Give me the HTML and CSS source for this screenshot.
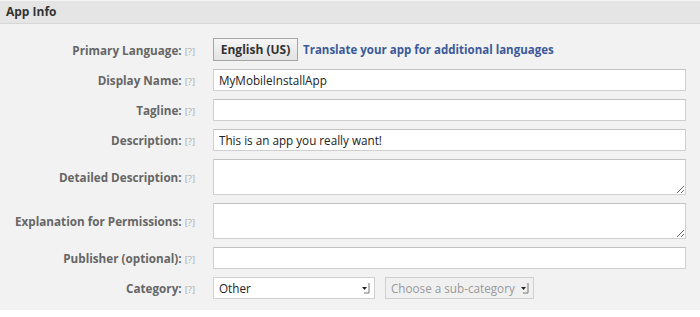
FILE: index.html
```html
<!DOCTYPE html>
<html>
<head>
<meta charset="utf-8">
<link rel="stylesheet" href="styles.css">
</head>
<body>
<div class="panel">
  <div class="header">App Info</div>
  <div class="form">
    <div class="label">Primary Language: <span class="help">[?]</span></div>
    <div class="field lang">
      <button class="btn">English (US)</button>
      <a class="link" href="#">Translate your app for additional languages</a>
    </div>

    <div class="label">Display Name: <span class="help">[?]</span></div>
    <div class="field"><input class="text" type="text" value="MyMobileInstallApp"></div>

    <div class="label">Tagline: <span class="help">[?]</span></div>
    <div class="field"><input class="text" type="text" value=""></div>

    <div class="label">Description: <span class="help">[?]</span></div>
    <div class="field"><input class="text" type="text" value="This is an app you really want!"></div>

    <div class="label">Detailed Description: <span class="help">[?]</span></div>
    <div class="field"><textarea class="area"></textarea></div>

    <div class="label">Explanation for Permissions: <span class="help">[?]</span></div>
    <div class="field"><textarea class="area"></textarea></div>

    <div class="label">Publisher (optional): <span class="help">[?]</span></div>
    <div class="field"><input class="text" type="text" value=""></div>

    <div class="label">Category: <span class="help">[?]</span></div>
    <div class="field selects">
      <div class="sel sel-cat">
        <span class="sel-text">Other</span>
        <svg class="arrow" width="9" height="12" viewBox="0 0 9 12"><path d="M1 5h5l-2.5 3z" fill="#222"/><path d="M8 1v10H3" stroke="#777" fill="none"/></svg>
      </div>
      <div class="sel sel-sub">
        <span class="sel-text">Choose a sub-category</span>
        <svg class="arrow" width="9" height="12" viewBox="0 0 9 12"><path d="M1 5h5l-2.5 3z" fill="#222"/><path d="M8 1v10H3" stroke="#777" fill="none"/></svg>
      </div>
    </div>
  </div>
</div>
</body>
</html>
```
FILE: styles.css
```css
html, body {
  margin: 0;
  padding: 0;
  background: #ffffff;
}
body {
  font-family: "Open Sans", "DejaVu Sans", sans-serif;
  font-size: 11px;
  color: #333;
}
.panel {
  background: #f2f2f2;
  width: 700px;
  height: 310px;
}
.header {
  height: 22px;
  line-height: 21px;
  background: #e5e5e5;
  border-top: 1px solid #f4f4f4;
  border-bottom: 1px solid #d6d6d6;
  padding-left: 6px;
  font-weight: bold;
  font-size: 12px;
  color: #333;
}
.form {
  display: grid;
  grid-template-columns: 195px 473px;
  column-gap: 18px;
  row-gap: 8px;
  padding-top: 14px;
}
.label {
  text-align: right;
  font-weight: bold;
  color: #666;
  font-size: 11.7px;
  align-self: center;
  white-space: nowrap;
}
.help {
  font-weight: normal;
  color: #aaa;
  font-size: 9.5px;
}
.field {
  display: flex;
  align-items: center;
}
.lang {
  gap: 5px;
}
.btn {
  height: 23px;
  width: 85px;
  padding: 0;
  border: 1px solid #a5a5a5;
  border-radius: 0;
  background: linear-gradient(#f6f6f6, #e2e2e2);
  font-family: inherit;
  font-weight: bold;
  font-size: 12px;
  color: #333;
}
.link {
  color: #3b5998;
  font-weight: bold;
  font-size: 11.5px;
  text-decoration: none;
}
.text {
  box-sizing: border-box;
  width: 473px;
  height: 22px;
  border: 1px solid #cfcfcf;
  border-top-color: #c2c2c2;
  background: #fff;
  padding: 0 5px;
  font-family: inherit;
  font-size: 11.7px;
  color: #222;
  outline: none;
}
.area {
  box-sizing: border-box;
  width: 473px;
  height: 36px;
  border: 1px solid #cfcfcf;
  border-top-color: #c2c2c2;
  background: #fff;
  margin: 0;
  display: block;
  outline: none;
}
.selects {
  gap: 10px;
}
.sel {
  position: relative;
  box-sizing: border-box;
  height: 22px;
  border: 1px solid #d0d0d0;
  display: flex;
  align-items: center;
  padding-left: 5px;
  font-size: 11.7px;
}
.sel-cat {
  width: 162px;
  background: #fff;
  color: #222;
}
.sel-sub {
  width: 149px;
  background: #f0f0f0;
  color: #999;
}
.arrow {
  position: absolute;
  right: 4px;
  top: 4px;
}
```
